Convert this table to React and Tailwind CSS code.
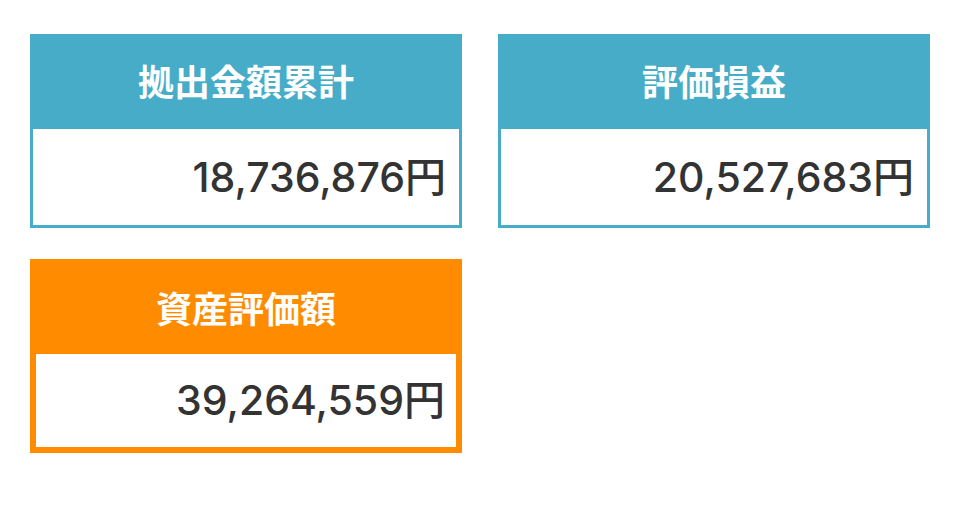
export default function App() {
  const font = { fontFamily: '"Noto Sans CJK JP", "Noto Sans", sans-serif' };
  const Card = ({ title, value, orange }) => (
    <div
      className={
        orange
          ? "flex flex-col border-[6px] border-[#ff8c00]"
          : "flex flex-col border-[3px] border-[#46acc7]"
      }
    >
      <div
        className={
          orange
            ? "flex h-[89px] items-center justify-center bg-[#ff8c00] pb-[6px] text-[36px] font-bold leading-none text-white"
            : "flex h-[92px] items-center justify-center bg-[#46acc7] pb-[6px] text-[36px] font-bold leading-none text-white"
        }
      >
        {title}
      </div>
      <div
        className={
          orange
            ? "flex h-[93px] items-center justify-end bg-white pr-[11px] font-['Inter','Noto_Sans_CJK_JP',sans-serif] text-[41px] font-medium leading-none text-[#333333]"
            : "flex h-[96px] items-center justify-end bg-white pr-[13px] font-['Inter','Noto_Sans_CJK_JP',sans-serif] text-[41px] font-medium leading-none text-[#333333]"
        }
      >
        {value}
      </div>
    </div>
  );
  return (
    <div className="min-h-[506px] w-[960px] bg-white" style={font}>
      <div className="grid grid-cols-2 gap-x-[36px] gap-y-[31px] px-[30px] pt-[34px]">
        <Card title="拠出金額累計" value="18,736,876円" />
        <Card title="評価損益" value="20,527,683円" />
        <Card title="資産評価額" value="39,264,559円" orange />
      </div>
    </div>
  );
}
